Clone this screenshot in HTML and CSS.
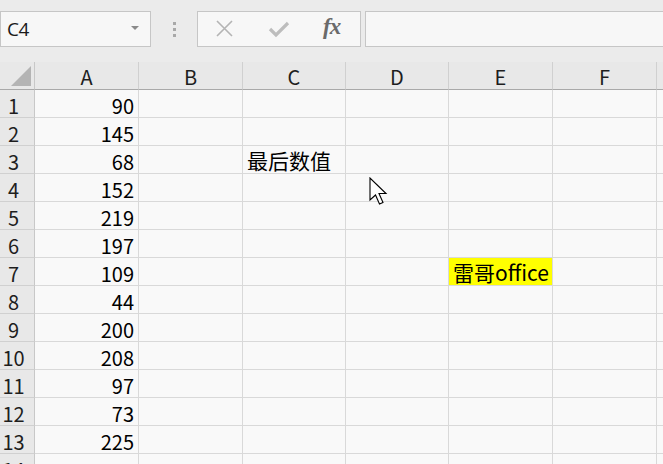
FILE: index.html
```html
<!DOCTYPE html>
<html lang="zh">
<head>
<meta charset="utf-8">
<link rel="stylesheet" href="styles.css">
</head>
<body>
<div class="app">
  <div class="toolbar">
    <div class="namebox">
      <span class="ref">C4</span>
      <span class="caret"></span>
    </div>
    <div class="grip"><i></i><i></i><i></i></div>
    <div class="fxbox">
      <svg class="ico" width="20" height="20" viewBox="0 0 20 20"><path d="M2 2 L17 17 M17 2 L2 17" stroke="#b4b4b4" stroke-width="1.6" fill="none"/></svg>
      <svg class="ico" width="22" height="20" viewBox="0 0 22 20"><path d="M2 10 L8 16 L20 4" stroke="#bdbdbd" stroke-width="3.2" fill="none" stroke-linejoin="miter"/></svg>
      <span class="fx">fx</span>
    </div>
    <div class="formula"></div>
  </div>
  <div class="sheet">
    <div class="hd corner"><span class="tri"></span></div>
    <div class="hd col">A</div>
    <div class="hd col">B</div>
    <div class="hd col">C</div>
    <div class="hd col">D</div>
    <div class="hd col">E</div>
    <div class="hd col">F</div>
    <div class="hd col last"></div>

    <div class="rh">1</div><div class="c num">90</div><div class="c"></div><div class="c"></div><div class="c"></div><div class="c"></div><div class="c"></div><div class="c"></div>
    <div class="rh">2</div><div class="c num">145</div><div class="c"></div><div class="c"></div><div class="c"></div><div class="c"></div><div class="c"></div><div class="c"></div>
    <div class="rh">3</div><div class="c num">68</div><div class="c"></div><div class="c txt">最后数值</div><div class="c"></div><div class="c"></div><div class="c"></div><div class="c"></div>
    <div class="rh">4</div><div class="c num">152</div><div class="c"></div><div class="c"></div><div class="c"></div><div class="c"></div><div class="c"></div><div class="c"></div>
    <div class="rh">5</div><div class="c num">219</div><div class="c"></div><div class="c"></div><div class="c"></div><div class="c"></div><div class="c"></div><div class="c"></div>
    <div class="rh">6</div><div class="c num">197</div><div class="c"></div><div class="c"></div><div class="c"></div><div class="c"></div><div class="c"></div><div class="c"></div>
    <div class="rh">7</div><div class="c num">109</div><div class="c"></div><div class="c"></div><div class="c"></div><div class="c txt hl">雷哥office</div><div class="c"></div><div class="c"></div>
    <div class="rh">8</div><div class="c num">44</div><div class="c"></div><div class="c"></div><div class="c"></div><div class="c"></div><div class="c"></div><div class="c"></div>
    <div class="rh">9</div><div class="c num">200</div><div class="c"></div><div class="c"></div><div class="c"></div><div class="c"></div><div class="c"></div><div class="c"></div>
    <div class="rh">10</div><div class="c num">208</div><div class="c"></div><div class="c"></div><div class="c"></div><div class="c"></div><div class="c"></div><div class="c"></div>
    <div class="rh">11</div><div class="c num">97</div><div class="c"></div><div class="c"></div><div class="c"></div><div class="c"></div><div class="c"></div><div class="c"></div>
    <div class="rh">12</div><div class="c num">73</div><div class="c"></div><div class="c"></div><div class="c"></div><div class="c"></div><div class="c"></div><div class="c"></div>
    <div class="rh">13</div><div class="c num">225</div><div class="c"></div><div class="c"></div><div class="c"></div><div class="c"></div><div class="c"></div><div class="c"></div>
    <div class="rh">14</div><div class="c"></div><div class="c"></div><div class="c"></div><div class="c"></div><div class="c"></div><div class="c"></div><div class="c"></div>
  </div>
  <svg class="cursor" width="19" height="29" viewBox="0 0 19 29"><path d="M1 1 L1 23 L6.5 18 L10.5 27 L14 25.5 L10 16.5 L17 16.5 Z" fill="#ffffff" stroke="#000000" stroke-width="1.1" stroke-linejoin="miter"/></svg>
</div>
</body>
</html>
```
FILE: styles.css
```css
html, body {
  margin: 0;
  padding: 0;
  width: 663px;
  height: 464px;
  overflow: hidden;
  background: #e9e9e9;
}
.app {
  position: relative;
  width: 663px;
  height: 464px;
  overflow: hidden;
  font-family: "Noto Sans CJK SC", "Liberation Sans", sans-serif;
}
.toolbar {
  height: 62px;
  box-sizing: border-box;
  padding-top: 11px;
  display: flex;
  align-items: flex-start;
  background: #ebebeb;
}
.namebox {
  width: 151px;
  height: 36px;
  box-sizing: border-box;
  border: 1px solid #c6c6c6;
  background: #f7f7f7;
  display: flex;
  align-items: center;
  justify-content: space-between;
  padding: 0 11px 0 6px;
}
.ref {
  font-family: "Open Sans", "Noto Sans", sans-serif;
  font-size: 19px;
  color: #1a1a1a;
  letter-spacing: -0.5px;
}
.caret {
  width: 0;
  height: 0;
  border-left: 4px solid transparent;
  border-right: 4px solid transparent;
  border-top: 4px solid #8a8a8a;
  margin-top: -2px;
}
.grip {
  width: 46px;
  height: 36px;
  display: flex;
  flex-direction: column;
  align-items: center;
  justify-content: center;
  gap: 3px;
}
.grip i {
  display: block;
  width: 3px;
  height: 3px;
  background: #a8a8a8;
}
.fxbox {
  width: 164px;
  height: 36px;
  box-sizing: border-box;
  border: 1px solid #c6c6c6;
  background: #f7f7f7;
  display: flex;
  align-items: center;
  padding-left: 17px;
}
.ico { display: block; }
.fxbox .ico:first-child { margin-right: 33px; }
.fxbox .ico:nth-child(2) { margin-right: 33px; }
.fx {
  font-family: "Liberation Serif", serif;
  font-style: italic;
  font-weight: bold;
  font-size: 23px;
  color: #6a6a6a;
  letter-spacing: -1px;
  margin-top: -4px;
}
.formula {
  flex: 1;
  margin-left: 4px;
  height: 36px;
  box-sizing: border-box;
  border: 1px solid #c6c6c6;
  border-right: none;
  background: #f7f7f7;
}
.sheet {
  display: grid;
  grid-template-columns: 35px 104px 104px 103px 103px 104px 104px 20px;
  grid-auto-rows: 28px;
  background: #f9f9f9;
}
.hd {
  box-sizing: border-box;
  background: #e8e8e8;
  border-bottom: 1px solid #a9a9a9;
  border-right: 1px solid #d0d0d0;
  display: flex;
  align-items: center;
  justify-content: center;
  padding-top: 2px;
  font-size: 20px;
  color: #1e1e1e;
}
.corner {
  position: relative;
  border-right-color: #c8c8c8;
}
.tri {
  position: absolute;
  right: 3px;
  bottom: 3px;
  width: 0;
  height: 0;
  border-left: 20px solid transparent;
  border-bottom: 20px solid #b4b4b4;
}
.hd.last { border-right: none; }
.rh {
  box-sizing: border-box;
  background: #e8e8e8;
  border-right: 1px solid #c8c8c8;
  border-bottom: 1px solid #d0d0d0;
  font-size: 20px;
  color: #1e1e1e;
  line-height: 27px;
  padding-top: 2px;
  text-align: center;
  padding-right: 7px;
}
.c {
  box-sizing: border-box;
  border-right: 1px solid #d9d9d9;
  border-bottom: 1px solid #d9d9d9;
  font-size: 20px;
  line-height: 27px;
  padding-top: 2px;
  color: #000;
  white-space: nowrap;
}
.num {
  text-align: right;
  padding-right: 4px;
}
.txt {
  padding-left: 4px;
  font-size: 21px;
  padding-top: 1px;
}
.hl {
  background: #ffff00;
}
.cursor {
  position: absolute;
  left: 369px;
  top: 177px;
}
```
